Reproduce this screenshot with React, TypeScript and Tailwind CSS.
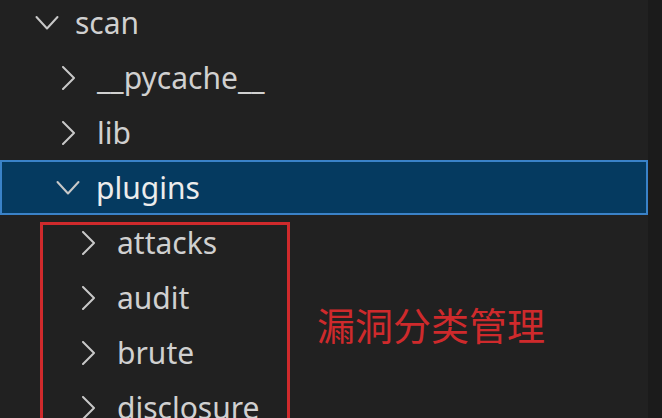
const rows = [
  { name: 'scan', level: 0, open: true },
  { name: '__pycache__', level: 1, open: false },
  { name: 'lib', level: 1, open: false },
  { name: 'plugins', level: 1, open: true, selected: true },
  { name: 'attacks', level: 2, open: false },
  { name: 'audit', level: 2, open: false },
  { name: 'brute', level: 2, open: false },
  { name: 'disclosure', level: 2, open: false },
];

const indent = ['pl-[35px]', 'pl-[57px]', 'pl-[77px]'];

function Chevron({ open }: { open: boolean }) {
  return (
    <svg className="w-[24px] h-[24px] shrink-0" viewBox="0 0 24 24" fill="none" stroke="#c8c8c8" strokeWidth={2} strokeLinecap="round" strokeLinejoin="round">
      {open ? <polyline points="1.5,6 12,17.5 22.5,6" /> : <polyline points="6,1 17,12 6,23" />}
    </svg>
  );
}

export default function App() {
  return (
    <div className="h-[418px] w-[662px] overflow-hidden bg-[#212121] flex" style={{ fontFamily: '"Noto Sans", "Open Sans", sans-serif' }}>
      <div className="relative flex-1 -mt-[5px]">
        {rows.map((r) => (
          <div
            key={r.name}
            className={`h-[55px] flex items-center gap-[16px] text-[30px] ${
              r.selected
                ? 'pl-[54px] gap-[15px] bg-[#053a60] border-2 border-[#3a82c8] text-[#ececec]'
                : `${indent[r.level]} text-[#d0d0d0]`
            }`}
          >
            <Chevron open={r.open} />
            <span className="leading-none">{r.name}</span>
          </div>
        ))}

        {/* 标注 */}
        <div className="absolute left-[40px] top-[227px] w-[250px] h-[220px] border-[3px] border-[#cf2a2c]" />
        <div
          className="absolute left-[317px] top-[310px] text-[38px] leading-none text-[#cf2a2c]"
          style={{ fontFamily: '"Noto Sans CJK SC", sans-serif' }}
        >
          漏洞分类管理
        </div>
      </div>
      <div className="w-[14px] bg-[#1b1b1b]" />
    </div>
  );
}
